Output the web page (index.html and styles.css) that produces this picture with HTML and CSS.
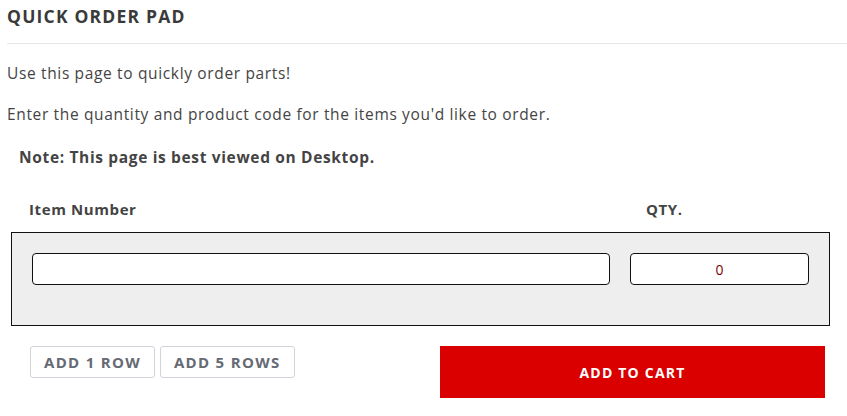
FILE: index.html
```html
<!DOCTYPE html>
<html>
<head>
<meta charset="utf-8">
<link rel="stylesheet" href="styles.css">
</head>
<body>
<div class="page">
  <h1 class="title">QUICK ORDER PAD</h1>
  <p class="intro first">Use this page to quickly order parts!</p>
  <p class="intro second">Enter the quantity and product code for the items you'd like to order.</p>
  <p class="note">Note: This page is best viewed on Desktop.</p>
  <div class="labels">
    <span class="lbl-item">Item Number</span>
    <span class="lbl-qty">QTY.</span>
  </div>
  <div class="pad">
    <input class="in-item" type="text">
    <input class="in-qty" type="text" value="0">
  </div>
  <div class="actions">
    <div class="row-btns">
      <button class="btn-ghost">ADD 1 ROW</button>
      <button class="btn-ghost">ADD 5 ROWS</button>
    </div>
    <button class="btn-cart">ADD TO CART</button>
  </div>
</div>
</body>
</html>
```
FILE: styles.css
```css
* { box-sizing: border-box; }
html, body { margin: 0; padding: 0; background: #fff; }
body {
  font-family: "Open Sans", "Noto Sans", sans-serif;
  color: #444;
}
.page { padding: 0 0 0 7px; }
.title {
  margin: 0;
  padding: 4px 0 15px;
  font-size: 17.5px;
  font-weight: 700;
  letter-spacing: 1.2px;
  line-height: 24px;
  color: #3a3a3a;
  border-bottom: 1px solid #e6e6e6;
}
.intro {
  margin: 18px 0 0;
  font-size: 15.5px;
  letter-spacing: 0.65px;
  line-height: 22px;
}
.intro.second { margin-top: 19px; }
.note {
  margin: 21px 0 0 12px;
  font-size: 15.5px;
  font-weight: 700;
  letter-spacing: 0.65px;
  line-height: 22px;
}
.labels {
  display: flex;
  margin: 30px 0 0 22px;
  font-size: 15px;
  font-weight: 700;
  letter-spacing: 0.6px;
  line-height: 22px;
}
.lbl-item { width: 617px; }
.pad {
  display: flex;
  gap: 20px;
  margin: 12px 0 0 4px;
  width: 819px;
  height: 94px;
  padding: 20px;
  background: #eee;
  border: 1px solid #111;
}
.pad input {
  height: 32px;
  border: 1px solid #111;
  border-radius: 4px;
  background: #fff;
  font-family: "Open Sans", sans-serif;
  font-size: 14px;
}
.in-item { width: 578px; }
.in-qty { width: 179px; text-align: center; color: #800000; }
.actions {
  display: flex;
  justify-content: space-between;
  margin: 20px 0 0 23px;
  width: 795px;
}
.row-btns { display: flex; gap: 5px; align-self: flex-start; }
.btn-ghost {
  height: 32px;
  padding: 0 13px;
  background: #fff;
  border: 1px solid #d3d3dc;
  border-radius: 3px;
  font-family: "Open Sans", sans-serif;
  font-size: 15px;
  font-weight: 700;
  letter-spacing: 1.3px;
  color: #666a74;
}
.btn-cart {
  width: 385px;
  height: 52px;
  background: #da0000;
  border: 0;
  color: #fff;
  font-family: "Open Sans", sans-serif;
  font-size: 14px;
  font-weight: 700;
  letter-spacing: 1.2px;
}
```
